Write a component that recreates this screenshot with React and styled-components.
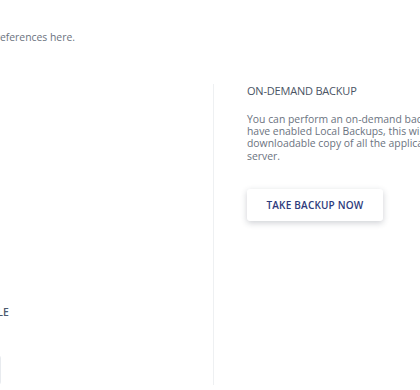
import React from "react";
import styled, { createGlobalStyle } from "styled-components";

const Global = createGlobalStyle`
  html, body { margin: 0; padding: 0; background: #fff; }
  body { font-family: "Open Sans", "Liberation Sans", sans-serif; -webkit-font-smoothing: antialiased; }
`;

const Viewport = styled.div`
  width: 420px;
  height: 390px;
  overflow: hidden;
`;

const Canvas = styled.div`
  margin-left: -300px;
  width: 900px;
  display: flex;
  flex-direction: column;
`;

const Intro = styled.p`
  margin: 30px 0 0;
  width: 375px;
  text-align: right;
  white-space: nowrap;
  font-size: 10.4px;
  line-height: 14px;
  color: #6b7380;
`;

const Columns = styled.div`
  margin-top: 40px;
  display: grid;
  grid-template-columns: 514px 1fr;
  height: 297px;
`;

const LeftCol = styled.div`
  border-right: 1px solid #eef0f2;
  display: flex;
  flex-direction: column;
  align-items: flex-end;
  padding-right: 204px;
`;

const FieldLabel = styled.h4`
  margin: 222px 0 0;
  font-size: 10.4px;
  line-height: 12px;
  font-weight: 600;
  letter-spacing: 0.2px;
  color: #4c5a6e;
  white-space: nowrap;
`;

const SelectBox = styled.div`
  margin-top: 37px;
  margin-right: 8px;
  width: 240px;
  height: 28px;
  border: 1px solid #e8ebef;
  border-radius: 3px;
`;

const RightCol = styled.div`
  padding-left: 33px;
  display: flex;
  flex-direction: column;
  align-items: flex-start;
`;

const SectionTitle = styled.h3`
  margin: 0;
  font-size: 11px;
  line-height: 14px;
  font-weight: 400;
  letter-spacing: -0.2px;
  color: #4a5464;
`;

const Description = styled.p`
  margin: 15px 0 0;
  font-size: 10.4px;
  line-height: 12.2px;
  color: #6b7380;
  white-space: nowrap;
`;

const Button = styled.button`
  margin-top: 27px;
  width: 136px;
  height: 32px;
  border: none;
  border-radius: 3px;
  background: #fff;
  box-shadow: 0 2px 6px rgba(30, 40, 60, 0.22);
  font-family: inherit;
  font-size: 10px;
  font-weight: 600;
  letter-spacing: 0.2px;
  color: #2d3a7c;
  cursor: pointer;
  padding: 0;
`;

export default function App() {
  return (
    <>
      <Global />
      <Viewport>
        <Canvas>
          <Intro>Configure your backup frequency and retention preferences here.</Intro>
          <Columns>
            <LeftCol>
              <FieldLabel>BACKUP RETENTION SCHEDULE</FieldLabel>
              <SelectBox />
            </LeftCol>
            <RightCol>
              <SectionTitle>ON-DEMAND BACKUP</SectionTitle>
              <Description>
                You can perform an on-demand backup of your server. If you
                <br />
                have enabled Local Backups, this will also generate a
                <br />
                downloadable copy of all the applications on this
                <br />
                server.
              </Description>
              <Button>TAKE BACKUP NOW</Button>
            </RightCol>
          </Columns>
        </Canvas>
      </Viewport>
    </>
  );
}
